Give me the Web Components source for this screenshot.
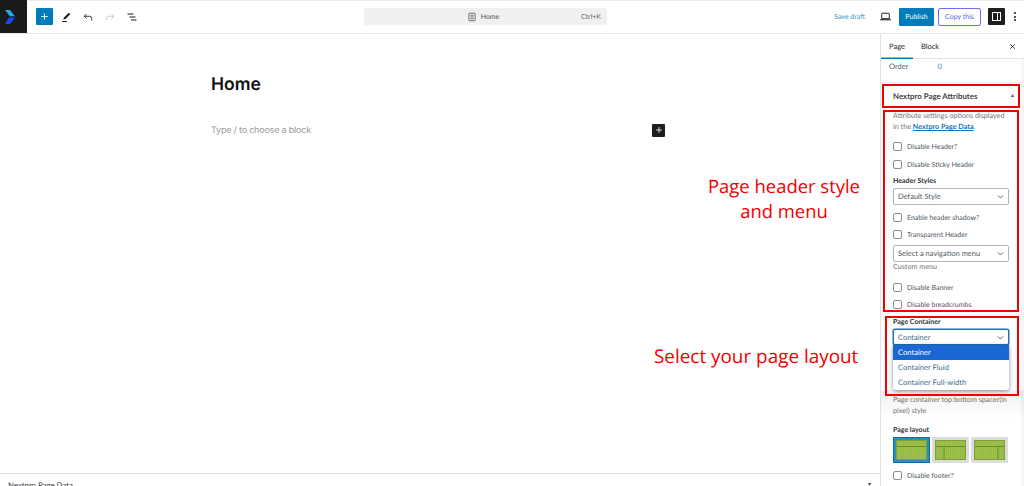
<!DOCTYPE html>
<html lang="en">
<head>
<meta charset="utf-8">
<title>Home</title>
<style>
  html, body { margin: 0; height: 486px; overflow: hidden; background: #fff; }
  body { font-family: Lato, "Noto Sans", sans-serif; color: #50575e; text-rendering: geometricPrecision; }
</style>
</head>
<body>
<edit-page></edit-page>
<script>
const ICONS = {
  plus: `<path d="M12 5v14M5 12h14" fill="none" stroke="currentColor" stroke-width="2"/>`,
  pen: `<path d="M17.5 3.5l3 3L11 16l-4.500 1.500L8 13z" fill="currentColor"/><path d="M4 21h10" stroke="currentColor" stroke-width="2"/>`,
  undo: `<path d="M9 6L4.500 10.500 9 15M5 10.500h9.500a5 5 0 0 1 5 5V19" fill="none" stroke="currentColor" stroke-width="1.800"/>`,
  redo: `<path d="M15 6l4.500 4.500L15 15M19 10.500H9.500a5 5 0 0 0-5 5V19" fill="none" stroke="currentColor" stroke-width="1.800"/>`,
  list: `<path d="M3 6h12M7 12h12M10 18h11" fill="none" stroke="currentColor" stroke-width="2"/>`,
  page: `<path d="M6 3h12a1.500 1.500 0 0 1 1.500 1.500v15A1.500 1.500 0 0 1 18 21H6a1.500 1.500 0 0 1-1.500-1.500v-15A1.500 1.500 0 0 1 6 3z" fill="none" stroke="currentColor" stroke-width="2"/><path d="M8 8h8M8 12h8M8 16h8" stroke="currentColor" stroke-width="1.800"/>`,
  laptop: `<path d="M6 6h12a1 1 0 0 1 1 1v9H5V7a1 1 0 0 1 1-1z" fill="none" stroke="currentColor" stroke-width="1.800"/><path d="M2 18h20" stroke="currentColor" stroke-width="2"/>`,
  close: `<path d="M6 6l12 12M18 6L6 18" fill="none" stroke="currentColor" stroke-width="2.200"/>`,
  chevron: `<path d="M5 9l7 7 7-7" fill="none" stroke="currentColor" stroke-width="2.400"/>`,
};
const icon = (name, size) => `<svg width="${size}" height="${size}" viewBox="0 0 24 24" aria-hidden="true">${ICONS[name]}</svg>`;

class TopBar extends HTMLElement {
  constructor() {
    super();
    this.attachShadow({ mode: "open" });
  }
  connectedCallback() {
    this.shadowRoot.innerHTML = `
      <style>
        :host { display: grid; grid-template-columns: 364px 243px 1fr; align-items: center; height: 34px; box-sizing: border-box; border-bottom: 1px solid #e6e6e6; background: #fff; box-shadow: inset 0 1px 0 #ececec; }
        .left { display: flex; align-items: center; }
        .logo { width: 27px; height: 33px; box-sizing: border-box; padding-left: 5px; background: #1a1a1a; flex: none; display: flex; align-items: center; margin-right: 9px; }
        .add { width: 17px; height: 17px; background: #007cba; color: #fff; border-radius: 1px; display: flex; align-items: center; justify-content: center; margin-right: 2px; }
        .tool { width: 22px; display: flex; justify-content: center; color: #1e1e1e; }
        .tool.off { color: #c4c4c4; }
        .search { position: relative; height: 17px; box-sizing: border-box; padding-right: 5px; background: #f0f0f0; border-radius: 2px; font-size: 7px; color: #555; display: flex; align-items: center; justify-content: center; gap: 4px; }
        .search .key { position: absolute; right: 6px; color: #666; }
        .right { display: flex; align-items: center; justify-content: flex-end; }
        .save { color: #3a94c7; font-size: 7px; margin-right: 14px; }
        .device { color: #1e1e1e; display: flex; margin-right: 7px; }
        .publish { background: #007cba; color: #fff; font-size: 7px; width: 35px; height: 18px; border-radius: 1px; display: flex; align-items: center; justify-content: center; margin-right: 4px; }
        .copy { border: 1px solid #6c6cf5; color: #5b5be8; font-size: 7px; width: 43px; height: 18px; box-sizing: border-box; border-radius: 2px; display: flex; align-items: center; justify-content: center; margin-right: 7px; }
        .panel { width: 17px; height: 17px; background: #1e1e1e; border-radius: 1px; display: flex; align-items: center; justify-content: center; margin-right: 4px; }
        .panel i { width: 9px; height: 9px; border: 1px solid #fff; position: relative; box-sizing: border-box; }
        .panel i::after { content: ""; position: absolute; right: 2px; top: 0; bottom: 0; width: 1px; background: #fff; }
        .more { width: 12px; color: #1e1e1e; display: flex; flex-direction: column; align-items: center; gap: 1.5px; margin-right: 3px; }
        .more b { width: 2px; height: 2px; border-radius: 50%; background: currentColor; }
      </style>
      <div class="left">
        <div class="logo">
          <svg width="12" height="16" viewBox="0 0 12 16" aria-hidden="true">
            <path d="M0 1h5l5 6.500H5z" fill="#25a8f0"/>
            <path d="M5 7.500h5L12 8.500 10 10.500H6.500z" fill="#10246e"/>
            <path d="M4 8.500h3.500L9 10l-4 5H0z" fill="#1a4be8"/>
          </svg>
        </div>
        <div class="add">${icon("plus", 11)}</div>
        <div class="tool">${icon("pen", 12)}</div>
        <div class="tool">${icon("undo", 12)}</div>
        <div class="tool off">${icon("redo", 12)}</div>
        <div class="tool">${icon("list", 12)}</div>
      </div>
      <div class="search">${icon("page", 10)}<span>Home</span><span class="key">Ctrl+K</span></div>
      <div class="right">
        <span class="save">Save draft</span>
        <span class="device">${icon("laptop", 13)}</span>
        <span class="publish">Publish</span>
        <span class="copy">Copy this</span>
        <span class="panel"><i></i></span>
        <span class="more"><b></b><b></b><b></b></span>
      </div>`;
  }
}

class EditorCanvas extends HTMLElement {
  constructor() {
    super();
    this.attachShadow({ mode: "open" });
  }
  connectedCallback() {
    this.shadowRoot.innerHTML = `
      <style>
        :host { display: flex; flex-direction: column; flex: 1; min-width: 0; background: #fff; }
        .content { flex: 1; padding: 39px 0 0 211px; box-sizing: border-box; }
        h1 { margin: 0; font: 600 17.5px/24px Inter, sans-serif; color: #111; }
        .row { margin-top: 26px; width: 454px; display: flex; align-items: center; justify-content: space-between; height: 14px; }
        .hint { font: 400 9px/14px Inter, sans-serif; letter-spacing: -.2px; color: #9a9a9a; padding-top: 2px; }
        .inserter { width: 13px; height: 13px; background: #1e1e1e; color: #fff; border-radius: 1px; display: flex; align-items: center; justify-content: center; }
        .bottom { height: 13px; box-sizing: border-box; border-top: 1px solid #e3e3e3; padding: 5px 0 0 8px; font-size: 7.8px; line-height: 12px; color: #333; display: flex; justify-content: space-between; }
        .bottom span:last-child { margin-right: 9px; font-size: 6px; color: #444; }
      </style>
      <div class="content">
        <h1>Home</h1>
        <div class="row">
          <span class="hint">Type / to choose a block</span>
          <span class="inserter">${icon("plus", 10)}</span>
        </div>
      </div>
      <div class="bottom"><span>Nextpro Page Data</span><span>▾</span></div>`;
  }
}

class CheckRow extends HTMLElement {
  constructor() {
    super();
    this.attachShadow({ mode: "open" });
  }
  connectedCallback() {
    this.shadowRoot.innerHTML = `
      <style>
        :host { display: flex; align-items: center; gap: 5px; height: 9px; font-size: 7px; color: #50575e; white-space: nowrap; }
        i { width: 7px; height: 7px; border: 1px solid #8c8f94; border-radius: 2px; background: #fff; flex: none; }
      </style>
      <i></i><slot></slot>`;
  }
}

class SelectBox extends HTMLElement {
  constructor() {
    super();
    this.attachShadow({ mode: "open" });
  }
  connectedCallback() {
    this.shadowRoot.innerHTML = `
      <style>
        :host { display: flex; align-items: center; justify-content: space-between; box-sizing: border-box; height: 17px; width: 116px; padding: 0 3px 0 4px; border: 1px solid #b0b3b8; border-radius: 2px; background: #fff; font-size: 7.5px; color: #50575e; white-space: nowrap; }
        :host([focus]) { height: 16px; border-color: #2271b1; box-shadow: 0 0 0 .5px #2271b1; color: #3c6e91; }
        svg { color: #50575e; }
      </style>
      <slot></slot>${icon("chevron", 9)}`;
  }
}

class LayoutThumb extends HTMLElement {
  constructor() {
    super();
    this.attachShadow({ mode: "open" });
  }
  connectedCallback() {
    const kind = this.getAttribute("kind");
    const col = kind === "left" ? `<path d="M9 7v13" stroke="#6a8a34"/>`
      : kind === "right" ? `<path d="M24 7v13" stroke="#6a8a34"/>` : "";
    const stripes = [...Array(15)].map((_, i) => `<path d="M${1.5 + i * 2} 0v20" stroke="#8fb340" stroke-width=".6"/>`).join("");
    this.shadowRoot.innerHTML = `
      <style>
        :host { display: flex; width: 37px; height: 26px; box-sizing: border-box; padding: 3px; background: #dcdcdc; border-radius: 1px; }
        :host([selected]) { background: #2b8fbd; box-shadow: inset 0 0 0 1px #0f6c99; }
        svg { display: block; width: 100%; height: 100%; }
      </style>
      <svg viewBox="0 0 31 20" preserveAspectRatio="none" aria-hidden="true">
        <rect width="31" height="20" fill="#9dc24a"/>${stripes}
        <path d="M0 6.500h31" stroke="#6a8a34"/>${col}
        <rect x=".5" y=".5" width="30" height="19" fill="none" stroke="#7f9f3a"/>
      </svg>`;
  }
}

class SettingsPanel extends HTMLElement {
  constructor() {
    super();
    this.attachShadow({ mode: "open" });
  }
  connectedCallback() {
    this.shadowRoot.innerHTML = `
      <style>
        :host { display: block; position: relative; width: 144px; flex: none; box-sizing: border-box; border-left: 1px solid #e3e3e3; background: #fff; overflow: hidden; font-size: 7.2px; color: #50575e; }
        .tabs { display: flex; align-items: center; height: 25px; box-sizing: border-box; border-bottom: 1px solid #e3e3e3; color: #1e1e1e; font-size: 7.5px; }
        .tab { width: 32px; height: 25px; display: flex; align-items: center; justify-content: center; box-sizing: border-box; }
        .tab.on { box-shadow: inset 0 -1.5px 0 #007cba; }
        .tab + .tab { width: 26px; margin-left: 4px; }
        .close { margin-left: auto; margin-right: 7px; display: flex; color: #1e1e1e; }
        .order { display: flex; height: 14px; align-items: center; padding: 0 0 9px 8px; gap: 29px; border-bottom: 1px solid #eee; font-size: 7.5px; }
        .order span + span { color: #3a94c7; }
        .title { display: flex; justify-content: space-between; align-items: center; height: 26px; padding: 0 9px 0 12px; font-weight: 700; color: #444; font-size: 7.85px; }
        .title small { font-size: 5px; color: #555; }
        .body { padding: 1px 0 0 12px; display: flex; flex-direction: column; align-items: flex-start; }
        .help { line-height: 11px; color: #757575; width: 118px; }
        .help a { color: #2271b1; font-weight: 700; text-decoration: underline; }
        .label { font-size: 7px; line-height: 10px; color: #2c3338; font-weight: 700; }
        .note { line-height: 10px; color: #757575; }
        .thumbs { display: flex; gap: 2px; }
        .menu { position: absolute; left: 12px; top: 311px; width: 116px; background: #fff; border-radius: 0 0 3px 3px; box-shadow: 0 1px 4px rgba(0,0,0,.45); color: #3c6e91; z-index: 2; font-size: 7.6px; }
        .menu div { height: 15px; line-height: 15px; padding-left: 5px; }
        .menu div:first-child { background: #1a66d2; color: #fff; }
        .fade { position: absolute; left: 0; right: 0; top: 356px; height: 28px; background: linear-gradient(rgba(0,0,0,.06), rgba(0,0,0,0)); z-index: 1; }
        .bar { position: absolute; right: 0; top: 25px; bottom: 0; width: 3px; background: #f5f5f5; }
      </style>
      <div class="tabs">
        <span class="tab on">Page</span><span class="tab">Block</span>
        <span class="close">${icon("close", 9)}</span>
      </div>
      <div class="order"><span>Order</span><span>0</span></div>
      <div class="title"><span>Nextpro Page Attributes</span><small>▲</small></div>
      <div class="body">
        <div class="help">Attribute settings options displayed in the <a>Nextpro Page Data</a>.</div>
        <check-row style="margin-top:10px">Disable Header?</check-row>
        <check-row style="margin-top:9px">Disable Sticky Header</check-row>
        <div class="label" style="margin-top:7px">Header Styles</div>
        <select-box style="margin-top:2px">Default Style</select-box>
        <check-row style="margin-top:8px">Enable header shadow?</check-row>
        <check-row style="margin-top:8px">Transparent Header</check-row>
        <select-box style="margin-top:6px">Select a navigation menu</select-box>
        <div class="note">Custom menu</div>
        <check-row style="margin-top:11px">Disable Banner</check-row>
        <check-row style="margin-top:8px">Disable breadcrumbs</check-row>
        <div class="label" style="margin-top:8px">Page Container</div>
        <select-box focus style="margin-top:2px">Container</select-box>
        <div class="help" style="margin-top:49px">Page container top:bottom spacer(in pixel) style</div>
        <div class="label" style="margin-top:9px">Page layout</div>
        <div class="thumbs" style="margin-top:2px">
          <layout-thumb selected></layout-thumb>
          <layout-thumb kind="left"></layout-thumb>
          <layout-thumb kind="right"></layout-thumb>
        </div>
        <check-row style="margin-top:8px">Disable footer?</check-row>
      </div>
      <div class="fade"></div>
      <div class="menu"><div>Container</div><div>Container Fluid</div><div>Container Full-width</div></div>
      <div class="bar"></div>`;
  }
}

class RedNote extends HTMLElement {
  constructor() {
    super();
    this.attachShadow({ mode: "open" });
  }
  connectedCallback() {
    this.shadowRoot.innerHTML = `
      <style>
        :host { position: absolute; color: #f00000; font: 400 18.45px/25px "Open Sans", "Noto Sans", sans-serif; text-align: center; white-space: nowrap; z-index: 5; }
      </style>
      <slot></slot>`;
  }
}

class RedFrame extends HTMLElement {
  constructor() {
    super();
    this.attachShadow({ mode: "open" });
  }
  connectedCallback() {
    this.shadowRoot.innerHTML = `
      <style>
        :host { position: absolute; box-sizing: border-box; border: 2px solid #f00000; z-index: 5; }
      </style>`;
  }
}

class EditPage extends HTMLElement {
  constructor() {
    super();
    this.attachShadow({ mode: "open" });
  }
  connectedCallback() {
    this.shadowRoot.innerHTML = `
      <style>
        :host { display: flex; flex-direction: column; width: 1024px; height: 486px; position: relative; overflow: hidden; }
        .main { display: flex; flex: 1; min-height: 0; }
      </style>
      <top-bar></top-bar>
      <div class="main">
        <editor-canvas></editor-canvas>
        <settings-panel></settings-panel>
      </div>
      <red-frame style="left:882px;top:84px;width:138px;height:24px"></red-frame>
      <red-frame style="left:883px;top:110px;width:136px;height:202px"></red-frame>
      <red-frame style="left:885px;top:316px;width:134px;height:80px"></red-frame>
      <red-note style="left:708px;top:174px">Page header style<br>and menu</red-note>
      <red-note style="left:654px;top:344px;font-size:18.9px">Select your page layout</red-note>`;
  }
}

customElements.define("top-bar", TopBar);
customElements.define("editor-canvas", EditorCanvas);
customElements.define("check-row", CheckRow);
customElements.define("select-box", SelectBox);
customElements.define("layout-thumb", LayoutThumb);
customElements.define("settings-panel", SettingsPanel);
customElements.define("red-note", RedNote);
customElements.define("red-frame", RedFrame);
customElements.define("edit-page", EditPage);
</script>
</body>
</html>
